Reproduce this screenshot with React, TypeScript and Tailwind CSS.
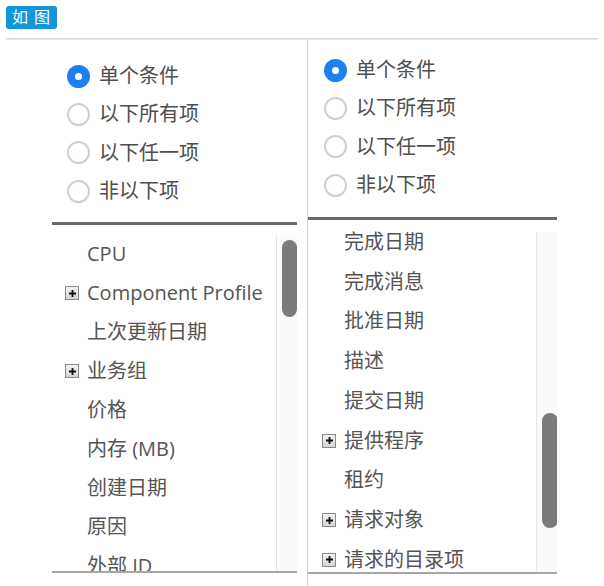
import React from "react";

type Item = { label: string; expandable?: boolean };

const options = ["单个条件", "以下所有项", "以下任一项", "非以下项"];

const leftItems: Item[] = [
  { label: "CPU" },
  { label: "Component Profile", expandable: true },
  { label: "上次更新日期" },
  { label: "业务组", expandable: true },
  { label: "价格" },
  { label: "内存 (MB)" },
  { label: "创建日期" },
  { label: "原因" },
  { label: "外部 ID" },
];

const rightItems: Item[] = [
  { label: "完成日期" },
  { label: "完成消息" },
  { label: "批准日期" },
  { label: "描述" },
  { label: "提交日期" },
  { label: "提供程序", expandable: true },
  { label: "租约" },
  { label: "请求对象", expandable: true },
  { label: "请求的目录项", expandable: true },
];

const PlusBox: React.FC = () => (
  <span className="w-[14px] h-[14px] shrink-0 border border-[#8a8a8a] bg-gradient-to-b from-[#f2f2f2] to-[#d4d4d4] flex items-center justify-center">
    <svg width="9" height="9" viewBox="0 0 9 9">
      <path d="M4.5 1v7M1 4.5h7" stroke="#111" strokeWidth="1.8" />
    </svg>
  </span>
);

const Radio: React.FC<{ checked?: boolean; label: string }> = ({ checked, label }) => (
  <div className="h-[38.3px] flex items-center gap-[9px]">
    {checked ? (
      <span className="w-[23px] h-[23px] rounded-full bg-[#1f7ff0] flex items-center justify-center">
        <span className="w-[7px] h-[7px] rounded-full bg-white" />
      </span>
    ) : (
      <span className="w-[23px] h-[23px] rounded-full border-2 border-[#d0d0d0] bg-white" />
    )}
    <span className="text-[20px] leading-none text-[#4e4e4e]">{label}</span>
  </div>
);

const App: React.FC = () => {
  return (
    <div
      className="w-[604px] h-[586px] bg-white overflow-hidden"
      style={{ fontFamily: '"Open Sans", "Noto Sans CJK SC", sans-serif' }}
    >
      <div className="pt-[5px] pl-[6px] h-[38px]">
        <span className="inline-flex items-center justify-center h-[23px] w-[51px] rounded-[3px] bg-[#1296db] text-white text-[16px] leading-none tracking-[1px]">
          如 图
        </span>
      </div>
      <div className="mx-[6px] h-[2px] bg-gradient-to-b from-[#d4d4d4] to-[#ececec]" />

      <div className="flex h-[546px]">
        {/* left panel */}
        <div className="ml-[52px] w-[245px] flex flex-col">
          <div className="h-[182px] pt-[17px] pl-[15px]">
            {options.map((o, i) => (
              <Radio key={o} label={o} checked={i === 0} />
            ))}
          </div>
          <div className="h-[3px] bg-[#6b6b6b]" />
          <div className="h-[346px] flex overflow-hidden">
            <div className="flex-1 pt-[10px] pl-[13px]">
              {leftItems.map((it) => (
                <div key={it.label} className="h-[38.9px] flex items-center">
                  {it.expandable ? <PlusBox /> : <span className="w-[14px] shrink-0" />}
                  <span className="ml-[8px] text-[20px] leading-none text-[#555] whitespace-nowrap">
                    {it.label}
                  </span>
                </div>
              ))}
            </div>
            <div className="w-[21px] mt-[10px] border-l border-[#e6e6e6] bg-[#fafafa] pl-[5px] pt-[5px]">
              <div className="w-[15px] h-[77px] rounded-full bg-[#7b7b7b]" />
            </div>
          </div>
          <div className="h-[2px] bg-[#a6a6a6]" />
        </div>

        {/* right panel */}
        <div className="ml-[10px] w-[250px] border-l border-[#cfcfcf] flex flex-col">
          <div className="h-[177px] pt-[11px] pl-[16px]">
            {options.map((o, i) => (
              <Radio key={o} label={o} checked={i === 0} />
            ))}
          </div>
          <div className="h-[3px] bg-[#6b6b6b]" />
          <div className="h-[352px] flex overflow-hidden">
            <div className="flex-1 pt-[2px] pl-[14px]">
              {rightItems.map((it) => (
                <div key={it.label} className="h-[39.75px] flex items-center">
                  {it.expandable ? <PlusBox /> : <span className="w-[14px] shrink-0" />}
                  <span className="ml-[8px] text-[20px] leading-none text-[#555] whitespace-nowrap">
                    {it.label}
                  </span>
                </div>
              ))}
            </div>
            <div className="w-[21px] mt-[12px] border-l border-[#e6e6e6] bg-[#fafafa] pl-[5px] pt-[181px]">
              <div className="w-[16px] h-[115px] rounded-full bg-[#7b7b7b]" />
            </div>
          </div>
          <div className="h-[2px] bg-[#a6a6a6]" />
        </div>
      </div>
    </div>
  );
};

export default App;
